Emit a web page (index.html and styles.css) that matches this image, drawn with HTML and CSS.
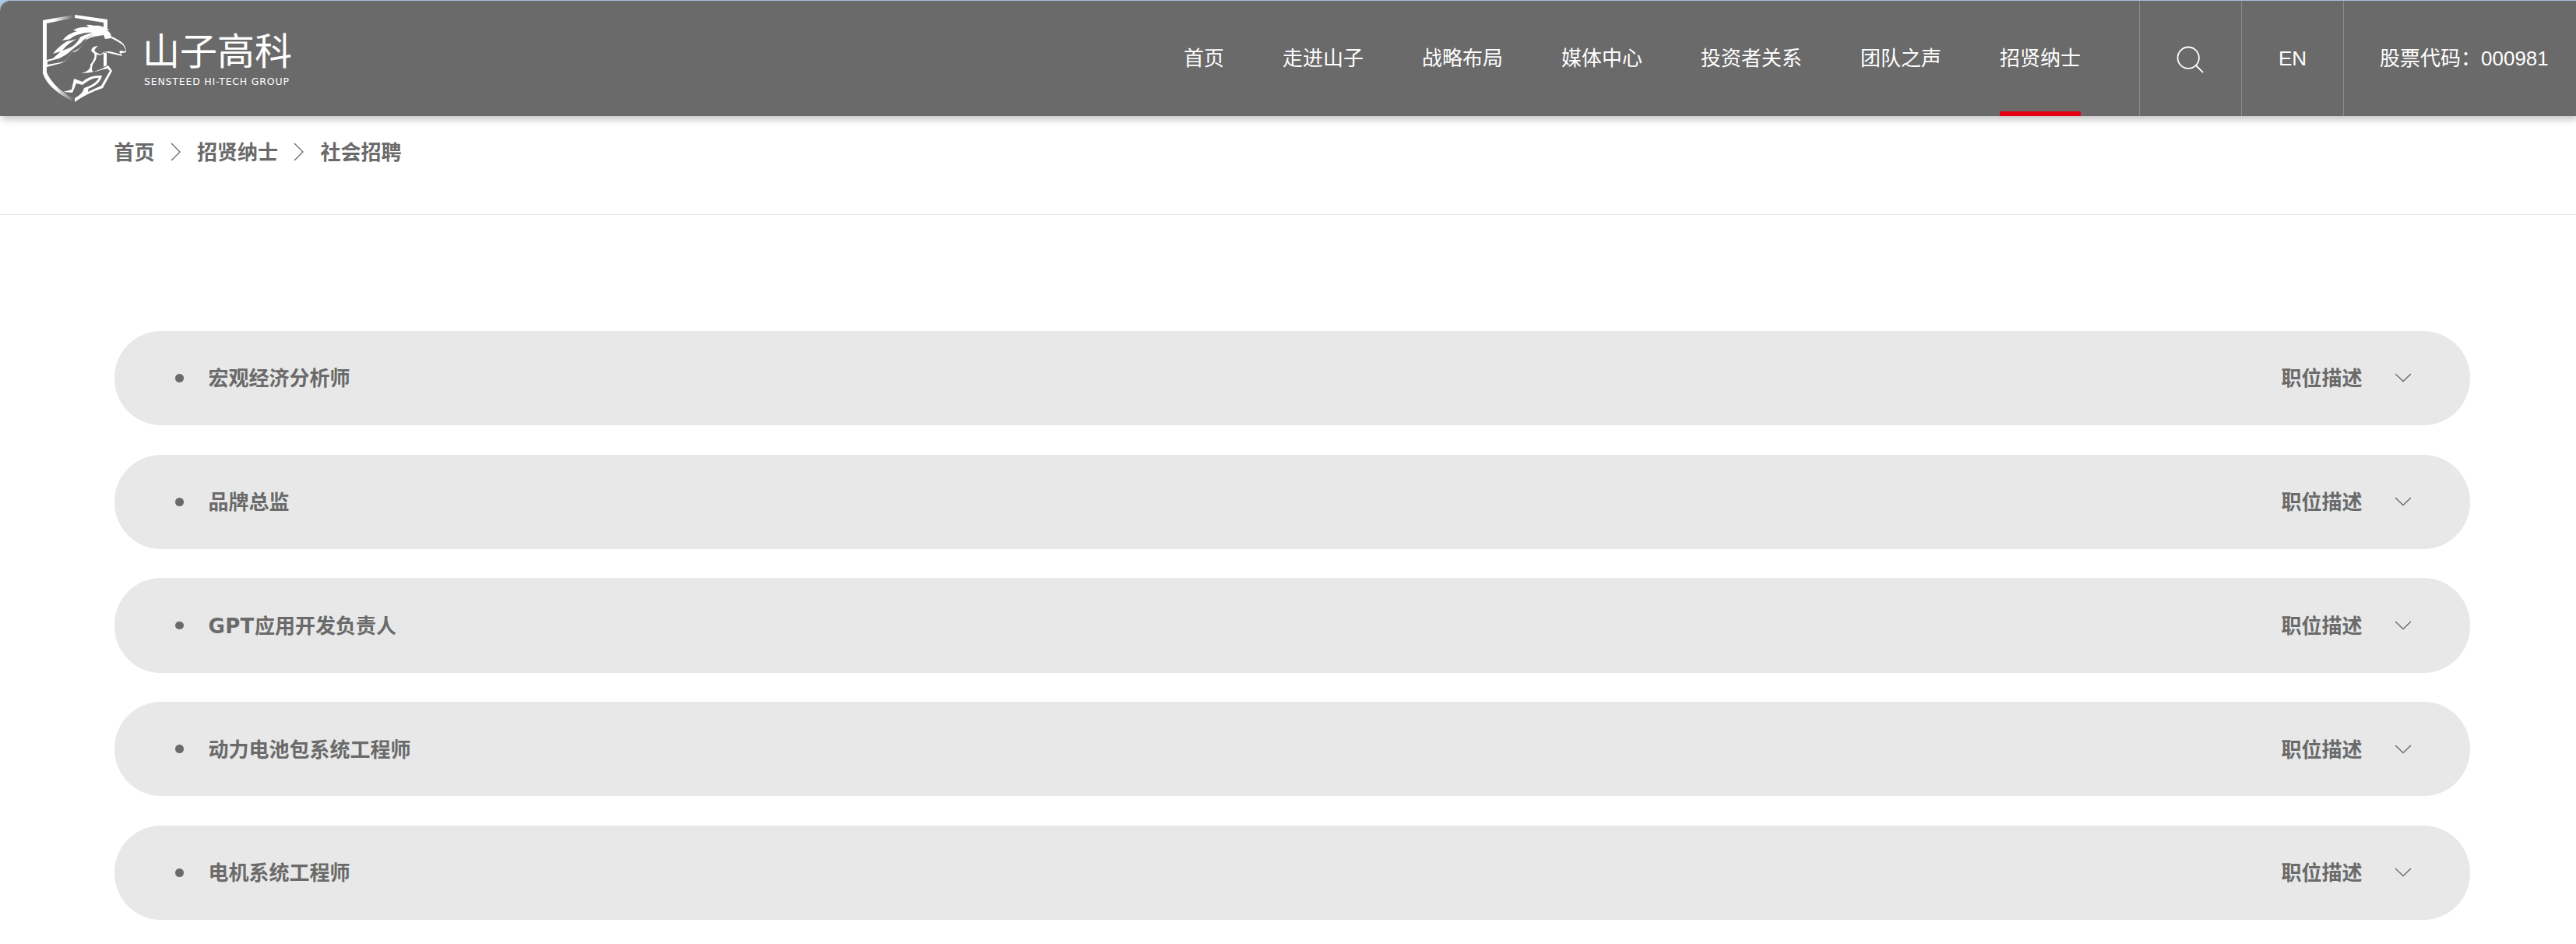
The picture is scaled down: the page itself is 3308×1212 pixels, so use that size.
FILE: index.html
```html
<!DOCTYPE html>
<html lang="zh-CN">
<head>
<meta charset="utf-8">
<title>社会招聘</title>
<link rel="stylesheet" href="styles.css">
</head>
<body>
<header class="header">
  <a class="brand">
    <svg class="emblem" viewBox="0 0 112 114" width="112" height="114">
      <defs>
        <linearGradient id="fadeTop" x1="0" x2="1"><stop offset="0.35" stop-color="#fff"/><stop offset="1" stop-color="#fff" stop-opacity="0"/></linearGradient>
        <linearGradient id="fadeLow" x1="0" x2="1"><stop offset="0.4" stop-color="#fff"/><stop offset="1" stop-color="#fff" stop-opacity="0"/></linearGradient>
      </defs>
      <path fill="url(#fadeTop)" d="M2 8L42 1V5L7 12H2Z"/>
      <path fill="#fff" d="M2 8H7V65L2 66Z"/>
      <path fill="#fff" d="M43 1L85 7V19L80 20V11L43 5Z"/>
      <path fill="url(#fadeLow)" d="M2 65H7V75Q15 94 42 109V113Q8 96 2 76Z"/>
      <path fill="#fff" d="M84 19Q76 14 68 15Q60 13 58 14L61 17Q48 16 41 21L46 22Q34 25 27 34L38 32Q22 41 15 51L25 48L15 57L7 59V68L26 63Q34 59 39 49Q46 50 53 39Q57 31 68 29L80 27L82 32L90 31Q100 36 105 40Q109 46 108 48L101 47Q99 49 103 52L92 49Q82 46 76 52L70 49Q66 46 73 41Q65 41 64 47Q67 52 76 53L82 49L104 54Q101 49 105 50L109 49Q109 41 103 36Q94 30 90 29Q89 23 84 21L88 20Z"/>
      <path fill="#6a6a6a" d="M49 26Q40 28 34 35L46 32Q56 26 66 24Q58 23 49 26ZM27 47Q34 37 50 30Q44 41 35 44ZM8 61L23 57Q35 51 38 47L51 37Q56 30 68 26L58 31Q52 45 39 49Q33 61 25 62L8 65Z"/>
      <path fill="#fff" d="M68 50Q70 57 63 65Q64 73 51 76Q70 76 86 66L91 73L79 95Q58 102 43 113V108Q53 103 55 95L61 93L60 100Q70 95 77 92L88 73L85 70Q79 71 69 74Q63 75 66 65Q72 57 71 51Z"/>
      <path fill="#fff" d="M28 100L39 97L42 83L53 87Q62 78 78 79Q76 90 60 96L56 95Q71 89 74 82Q65 81 53 91L45 89L40 101Z"/>
      <path fill="#fff" d="M80 50H84V66L80 68Z"/>
    </svg>
    <span class="brand-name"><span class="brand-cn">山子高科</span><span class="brand-en">SENSTEED HI-TECH GROUP</span></span>
  </a>
  <nav class="nav"><a>首页</a><a>走进山子</a><a>战略布局</a><a>媒体中心</a><a>投资者关系</a><a>团队之声</a><a class="active">招贤纳士</a></nav>
  <div class="tool"><svg width="36" height="36" viewBox="0 0 36 36" fill="none" stroke="#fff" stroke-width="1.8" stroke-linecap="round"><circle cx="15.2" cy="15.2" r="13.7"/><path d="M25 25l8.6 8.6"/></svg></div>
  <div class="tool lang">EN</div>
  <div class="stock">股票代码：000981</div>
</header>
<div class="breadcrumb">
  <a>首页</a><svg class="sep" width="14" height="24" viewBox="0 0 14 24"><path d="M1 1l11 11L1 23"/></svg><a>招贤纳士</a><svg class="sep" width="14" height="24" viewBox="0 0 14 24"><path d="M1 1l11 11L1 23"/></svg><a>社会招聘</a>
</div>
<main class="jobs">
  <div class="job"><i class="dot"></i><span class="title">宏观经济分析师</span><span class="desc">职位描述</span><svg class="chev" width="20" height="12" viewBox="0 0 20 12"><path d="M0 1l10 9.5L20 1"/></svg></div>
  <div class="job"><i class="dot"></i><span class="title">品牌总监</span><span class="desc">职位描述</span><svg class="chev" width="20" height="12" viewBox="0 0 20 12"><path d="M0 1l10 9.5L20 1"/></svg></div>
  <div class="job"><i class="dot"></i><span class="title"><span class="latin">GPT</span>应用开发负责人</span><span class="desc">职位描述</span><svg class="chev" width="20" height="12" viewBox="0 0 20 12"><path d="M0 1l10 9.5L20 1"/></svg></div>
  <div class="job"><i class="dot"></i><span class="title">动力电池包系统工程师</span><span class="desc">职位描述</span><svg class="chev" width="20" height="12" viewBox="0 0 20 12"><path d="M0 1l10 9.5L20 1"/></svg></div>
  <div class="job"><i class="dot"></i><span class="title">电机系统工程师</span><span class="desc">职位描述</span><svg class="chev" width="20" height="12" viewBox="0 0 20 12"><path d="M0 1l10 9.5L20 1"/></svg></div>
</main>
</body>
</html>
```
FILE: styles.css
```css
* { box-sizing: border-box; }
html { background: #fff; }
body {
  margin: 0;
  height: 1212px;
  overflow: hidden;
  font: 26px/38px "Liberation Sans", "Noto Sans CJK SC", sans-serif;
  color: #6a6a6a;
  background: linear-gradient(#b0c9e8 0 16px, #fff 16px);
}
.header {
  display: flex;
  height: 149px;
  border-top: 1px solid #a5bfdc;
  border-top-left-radius: 14px;
  background: #6a6a6a;
  color: #fff;
  box-shadow: 2px 4px 10px rgba(0, 0, 0, .25);
}
.brand { display: flex; margin-left: 53px; padding-top: 17px; }
.emblem { flex: none; }
.brand-name { display: flex; flex-direction: column; margin: 14px 0 0 19px; width: 192px; white-space: nowrap; }
.brand-cn { font: 400 48px/60px "Noto Sans CJK SC", sans-serif; margin-left: -1px; }
.brand-en { margin: 6px 0 0 1px; font: 12.5px/14px "DejaVu Sans", sans-serif; letter-spacing: .8px; }
.nav { display: flex; gap: 75px; margin-left: auto; margin-right: 75px; }
.nav a { display: flex; align-items: center; border-bottom: 6px solid transparent; padding-top: 5px; }
.nav .active { border-bottom-color: #e60012; }
.tool { display: flex; align-items: center; justify-content: center; width: 131px; border-left: 1px solid #8a8a8a; padding-top: 4px; }
.lang { padding-top: 0; }
.stock { display: flex; align-items: center; width: 299px; padding-left: 46px; border-left: 1px solid #8a8a8a; white-space: nowrap; }
.breadcrumb {
  display: flex;
  align-items: flex-start;
  height: 127px;
  padding: 28px 0 0 146.5px;
  border-bottom: 1px solid #e5e5e5;
  font-weight: 700;
}
.sep { flex: none; margin: 6px 20.5px 0 20px; }
.sep path, .chev path { fill: none; stroke: #6a6a6a; stroke-width: 1.3; }
.jobs { display: flex; flex-direction: column; gap: 37.55px; padding: 148.9px 136px 0 147px; }
.job {
  display: flex;
  align-items: center;
  flex: none;
  height: 121.2px;
  padding: 0 76px 0 78.4px;
  border-radius: 60px;
  background: #e8e8e8;
  font-weight: 700;
}
.dot { width: 10.6px; height: 10.6px; border-radius: 50%; background: #6a6a6a; }
.title { margin: 2px 0 0 31.5px; }
.latin { display: inline-block; width: 59.6px; font-family: "DejaVu Sans", sans-serif; letter-spacing: .3px; }
.desc { margin: 2px 0 0 auto; }
.chev { margin-left: 42.5px; }
```
